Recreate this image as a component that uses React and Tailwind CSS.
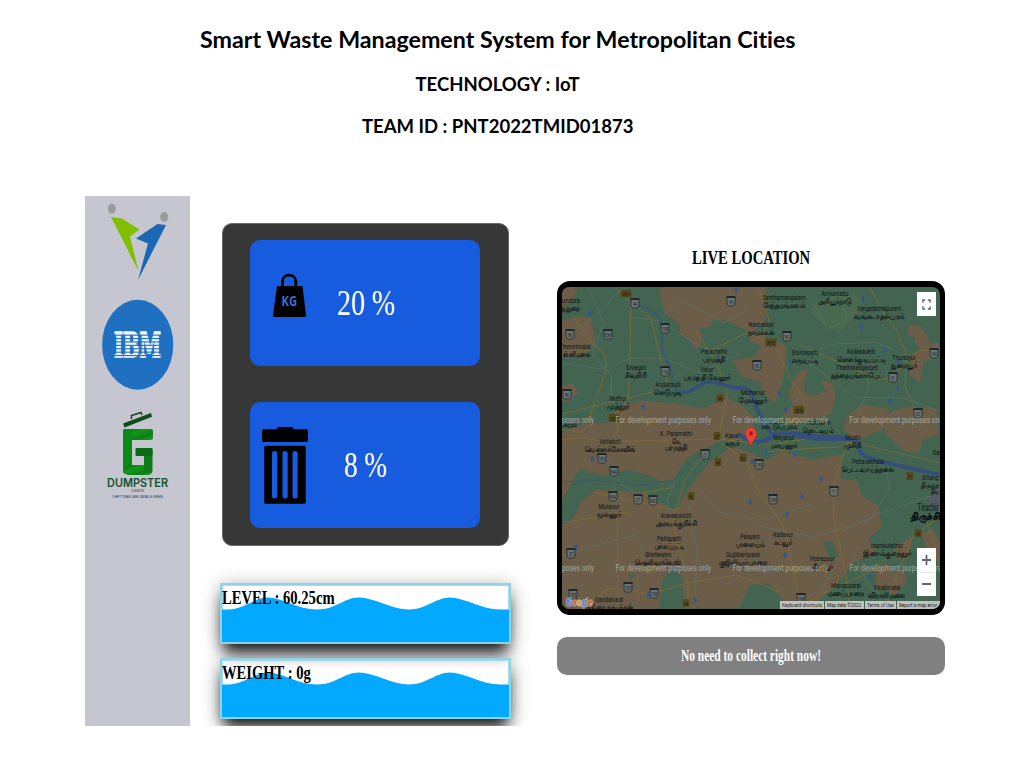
import { useLayoutEffect, useRef } from "react";

// Scales a single line of text horizontally so it fills its box.
function FitText({ className, children }) {
  const box = useRef(null);
  const line = useRef(null);
  useLayoutEffect(() => {
    const ratio = box.current.clientWidth / line.current.offsetWidth;
    line.current.style.transform = `scaleX(${ratio})`;
  }, []);
  return (
    <div ref={box} className={`flex whitespace-nowrap ${className}`}>
      <span ref={line} className="block shrink-0 origin-left">{children}</span>
    </div>
  );
}

function Header() {
  return (
    <header className="flex h-[196px] w-[995px] flex-col items-center pt-[24px] font-['Lato'] font-bold text-black [font-variant-ligatures:none]">
      <FitText className="h-[30px] w-[596px] text-[23.500px] leading-[30px]">Smart Waste Management System for Metropolitan Cities</FitText>
      <FitText className="mt-[17px] h-[26px] w-[164px] text-[18.500px] leading-[26px]">TECHNOLOGY : IoT</FitText>
      <FitText className="mt-[16px] h-[26px] w-[271px] text-[18.500px] leading-[26px]">TEAM ID : PNT2022TMID01873</FitText>
    </header>
  );
}

function PeopleLogo() {
  return (
    <svg className="mt-[5px] h-[82px] w-[70px]" viewBox="103 201 70 82">
      <ellipse cx="111.800" cy="208.700" rx="4" ry="5" fill="#9b9b9b" />
      <ellipse cx="164.200" cy="217" rx="4" ry="5" fill="#9b9b9b" />
      <path d="M111 217L122 218.500L139.500 229.500L130 236.500L138.500 271Z" fill="#7fbf00" />
      <path d="M166 225L157.500 224L136 238.500L148 243.500L138 280Z" fill="#1a68b3" />
    </svg>
  );
}

function IbmLogo() {
  return (
    <svg className="mt-[16px] h-[92px] w-[74px]" viewBox="101 299 74 92">
      <ellipse cx="137.700" cy="344.700" rx="35.600" ry="45" fill="#1f70c1" />
      <text x="114" y="357" fontFamily="DejaVu Serif" fontWeight="700" fontSize="34" textLength="47" lengthAdjust="spacingAndGlyphs" fill="#f0f7ff" stroke="#f0f7ff" strokeWidth="1.500">IBM</text>
      {[334.600, 338, 341.400, 344.800, 348.200, 351.600, 355].map((y) => (
        <rect key={y} x="110" y={y} width="55" height="1.100" fill="#1f70c1" />
      ))}
    </svg>
  );
}

function DumpsterLogo() {
  return (
    <svg className="mt-[17px] h-[95px] w-[80px]" viewBox="98 408 80 95">
      <defs>
        <linearGradient id="bin" x1="0" y1="0" x2="1" y2="1">
          <stop offset="0" stopColor="#0b5f13" />
          <stop offset="0.350" stopColor="#109a18" />
          <stop offset="0.700" stopColor="#0c7f16" />
          <stop offset="1" stopColor="#11a51c" />
        </linearGradient>
      </defs>
      <path d="M123 423.500L151 413L152 416.800L124.500 427.500Z" fill="#0d4d18" />
      <path d="M131.500 419V415.500L141 412.500L142 415" fill="none" stroke="#12401c" strokeWidth="1.500" />
      <rect x="123" y="429" width="30" height="11" rx="2" fill="url(#bin)" />
      <rect x="123" y="429" width="9" height="45" rx="3" fill="#0c8a16" />
      <rect x="125" y="465" width="27" height="10" rx="4" fill="url(#bin)" />
      <rect x="144" y="448" width="8.500" height="25" rx="2" fill="#0e7a18" />
      <rect x="135.500" y="448" width="17" height="8" rx="1" fill="#0b6a16" />
      <text x="107" y="487" fontFamily="Inter" fontWeight="600" fontSize="11.500" textLength="61" lengthAdjust="spacingAndGlyphs" fill="#164f28">DUMPSTER</text>
      <text x="131" y="492" fontFamily="Liberation Sans" fontSize="3" textLength="13" fill="#333a48">COLLECTS</text>
      <text x="112" y="497.500" fontFamily="Liberation Sans" fontSize="4.200" textLength="51" lengthAdjust="spacingAndGlyphs" fill="#2b3140">CHETTINAD IBM CATALIS SRMS</text>
    </svg>
  );
}

function WeightIcon() {
  return (
    <svg className="h-[46px] w-[36px]" viewBox="271 272 36 46">
      <path d="M282.500 288V281.500C282.500 273 295.800 273 295.800 281.500V288" fill="none" stroke="#000" strokeWidth="2.800" />
      <path d="M278 286H301.500Q302.400 286 302.600 287L306 315.500Q306 317 305 317H274Q272.800 317 273 315.500L276.800 287Q277 286 278 286Z" fill="#000" />
      <text x="281.500" y="306.300" fontFamily="Open Sans" fontWeight="700" fontSize="15" textLength="15.500" lengthAdjust="spacingAndGlyphs" fill="#3c6bd6">KG</text>
    </svg>
  );
}

function BinIcon() {
  return (
    <svg className="h-[78px] w-[48px]" viewBox="261 426 48 78">
      <rect x="276.800" y="427" width="16.500" height="5" rx="1.500" />
      <rect x="262" y="429.300" width="46" height="12.700" rx="1.500" />
      <rect x="264.200" y="445.700" width="41.500" height="58" rx="1.500" />
      {[272, 282.500, 292.500].map((x) => (
        <rect key={x} x={x} y="451" width="5.200" height="47.500" rx="2.500" fill="#175bde" />
      ))}
    </svg>
  );
}

function Gauges() {
  return (
    <section className="ml-[2px] mt-[27px] flex h-[323px] w-[287px] flex-col gap-[36px] rounded-[10px] border border-[#686868] bg-[#373737] pl-[27px] pt-[16px]">
      <div className="flex h-[126px] w-[230px] shrink-0 rounded-[10px] bg-[#175bde]">
        <div className="ml-[21px] mt-[32px]"><WeightIcon /></div>
        <FitText className="ml-[29.500px] mt-[43px] h-[40px] w-[58px] font-['Liberation_Serif'] text-[36px] leading-[40px] text-white">20 %</FitText>
      </div>
      <div className="flex h-[126px] w-[230px] shrink-0 rounded-[10px] bg-[#175bde]">
        <div className="ml-[11px] mt-[24px]"><BinIcon /></div>
        <FitText className="ml-[35px] mt-[43px] h-[40px] w-[43px] font-['Liberation_Serif'] text-[36px] leading-[40px] text-white">8 %</FitText>
      </div>
    </section>
  );
}

const WAVE =
  "M0 24.500H6C22 24.500 32 12.500 46 12.500S76 24.500 95 24.500S122 12.500 137 12.500S170 24.500 187 24.500S214 12.500 228 12.500S260 24.500 278 24.500H287V60H0Z";

function Wave({ label, width, className }) {
  return (
    <div className={`relative h-[60.500px] w-[291px] border-[2.500px] border-[#8fd3e8] ring-1 ring-[#a9dbe9] ring-inset shadow-[0_12px_14px_-4px_rgba(0,0,0,0.88),0_3px_18px_rgba(0,0,0,0.32)] ${className}`}>
      <svg className="block h-full w-full" viewBox="0 0 287 56.500" preserveAspectRatio="none">
        <path d={WAVE} fill="#02a9ff" />
      </svg>
      <div className="absolute left-0 top-[2px]">
        <FitText className={`font-['Liberation_Serif'] text-[18px] font-bold leading-[22px] text-black ${width}`}>{label}</FitText>
      </div>
    </div>
  );
}

const BROWN = [
  "M562 287H577L572 298L562 306Z",
  "M562 322L580 318L590 320L594 341L589 350L578 355L562 356Z",
  "M562 388L572 385L576 393L566 400H562Z",
  "M663 287C658 296 667 305 665 312L676 319L682 325L681 333L690 339L697 348L701 338L697 327L709 326L713 318L730 320L750 331L763 322L765 287Z",
  "M762 348L776 342L785 347L782 378L774 401L764 392L762 381L742 375L735 361L755 358Z",
  "M798 374L806 371L804 382L818 395L829 393L823 382L833 385L834 400L829 413L810 418L788 423L785 414L795 405L790 394Z",
  "M750 331L764 333L764 345L752 340Z",
  "M910 326L920 328L928 340L926 350L917 344L916 336L909 334Z",
  "M924 347L937 344L935 355L922 361L919 380L911 374L914 357Z",
  "M848 418L862 406L876 408L888 411L882 428L868 434L855 441L845 428Z",
  "M888 417L895 412L908 408L935 410L937 434L922 438L918 451L906 450L894 440L886 432Z",
  "M562 434L583 426L610 424L617 411L640 402L652 403L677 405L702 410L715 405L728 400L740 405L752 418L753 430L740 440L718 441L700 449L686 457L679 468L672 480L662 480L646 473L628 468L602 474L579 467L571 481L562 498Z",
  "M562 526L573 522L583 502L597 491L644 494L660 505L677 512L691 488L711 463L733 448L752 455L766 462L781 453L812 461L840 456L839 480L856 482L861 497L877 506L880 526L867 539L875 552L851 562L841 577L823 595L808 608H792L769 582L749 583L738 607H686L684 576L672 568L662 576L657 609H562Z",
  "M877 570L886 565L892 576L901 570L906 579L895 594L888 587L878 588Z",
  "M898 546L910 540L908 555L898 558Z",
  "M923 534L932 531L940 545V561L930 552Z",
];

const ROADS = [
  "M562 304C580 320 585 340 600 350S598 389 590 416S578 428 562 430",
  "M616 287L631 304L629 390L615 438",
  "M620 292L651 319L657 344L667 381L652 392L562 414",
  "M696 331L718 365L727 395L719 435L684 481L673 521L688 585V609",
  "M562 440C590 433 603 447 627 441L718 439L771 445L813 438L860 444L940 463",
  "M712 350L746 333L775 344L790 378L804 400L807 424",
  "M759 287L769 320L762 335M800 345L858 371L889 380L918 351L940 347",
  "M870 287L881 309L896 330L906 352L905 386L923 427",
  "M562 522L595 518L630 512M642 493L675 487M593 492L675 510",
  "M718 441L746 460L758 490L783 525L797 588L803 609",
  "M849 439L835 481L833 515L846 574L850 609",
  "M940 517L913 536L870 572L829 590L797 609M913 536L894 583L885 609",
  "M576 609L610 588L650 594L687 583L736 575L780 592",
  "M927 520L937 554L940 574M764 452L800 449L839 447",
];

const PATHS = [
  "M562 331C602 326 611 290 628 287M588 287L604 323L592 353L612 376L610 414",
  "M631 317L658 321L681 300L724 323L747 310M660 321L698 345L720 354",
  "M562 363L601 369L631 358L666 359L698 373L740 353",
  "M814 304L827 329L846 320L844 307M805 356L834 344L875 342L895 350",
  "M805 360L854 397L903 398L939 411M868 350L868 390L858 414",
  "M599 446L612 466L622 485L636 493M613 471L617 509L618 609",
  "M687 501L697 550L695 609M676 480L667 500L671 531",
  "M754 525L814 537L871 519L889 489L887 470M820 593L841 558",
  "M843 530L887 511L939 493M853 552L868 585L900 609",
  "M697 487L719 512L760 520L812 504M562 556L587 548L635 535L650 560",
];

// [x, y, latin name, width, tamil name, tamil width, emphasised]
const PLACES = [
  [571, 303, "undura", 18, "ந்துறை", 18],
  [577, 349, "hennimalai", 28, "ன்னிமலை", 28],
  [636, 370, "Sivagiri", 20, "சிவகிரி", 22],
  [714, 354, "Paramathi", 26, "பரமத்தி", 23],
  [707, 372, "Velur", 13, "பரமத்தி வேலூர்", 47],
  [668, 387, "Kodumudi", 25, "கொடுமுடி", 28],
  [618, 401, "Muthur", 17, "முத்தூர்", 22],
  [570, 419.500, "", 0, "கயம்", 14],
  [784, 300, "Senthamangalam", 43, "சேந்தமங்கலம்", 42],
  [835, 296, "Ariyurnadu", 27, "அரியூர்நாடு", 34],
  [879, 311, "Vangadathalpuram", 44, "வங்கடாதல்புரம்", 51],
  [761, 327, "Namakkal", 25, "நாமக்கல்", 27],
  [805, 355, "Erumapatti", 26, "எருமபட்டி", 27],
  [861, 354, "Kolakkatti", 28, "கொளக்குடிப்பட்டி", 48],
  [857, 370, "Thathaiangarpet", 42, "தத்தையங்கார்பேட்", 52],
  [904, 360, "Thuraiyur", 24, "துறையூர்", 26],
  [753, 395, "Mohanur", 24, "மோகனூர்", 28],
  [676, 436, "K. Paramathi", 32, "கே.", 9],
  [676, 442.500, "", 0, "பரமத்தி", 23],
  [610, 444, "Vellakoil", 21, "வெள்ளக்கோவில்", 51],
  [732, 438, "Karur", 14, "கரூர்", 15],
  [779, 421, "", 0, "காட்டுப்புரம்", 37],
  [818, 425, "Thottiyam", 25, "தொட்டியம்", 30],
  [784, 440, "Mayanur", 21, "மாயனூர்", 26],
  [853, 440, "Musiri", 15, "முசிறி", 18],
  [936, 455, "Sa", 7, "", 0],
  [868, 464, "Pettavaithalai", 32, "பெட்டவாய்த்தலை", 52],
  [930, 480, "Srirang", 16, "திருவர", 18],
  [935, 486.500, "", 0, "தீவ", 8],
  [609, 509, "Mulanur", 21, "மூலனூர்", 25],
  [676, 518, "Aravakurichi", 31, "அரவக்குறிச்சி", 41],
  [669, 541, "Pallapatti", 24, "பள்ளப்பட்டி", 29],
  [658, 557, "Sheliwales", 26, "ஷெலிவாலெஸ்", 46],
  [750, 539, "Palayam", 20, "பாளையம்", 29],
  [743, 557, "Gujjiliamparai", 34, "குஜிலியம்பாறை", 49],
  [783, 537, "Kadavur", 20, "கடவூர்", 18],
  [822, 561, "Veerappur", 25, "வீரப்பூர்", 22],
  [887, 548, "Inamkulathur", 32, "இனாம்குளத்தூர்", 48],
  [846, 588, "Manapparai", 30, "மணப்பாறை", 36],
  [887, 590, "Viralimalai", 27, "விராலிமலை", 38],
  [928, 511, "Tiruchir", 21, "திருச்சிர", 34, true],
  [609, 602, "Gandalvadi", 28, "குதிரை நாயக்கன்", 49],
];

const SHIELDS = [
  [635, 303, "44"], [665, 328, "198"], [608, 334, "83A"], [570, 334, "96"], [665, 371, "172A"], [731, 301, "94"],
  [567, 394, "96"], [787, 336, "161"], [757, 365, "95"], [893, 377, "31"], [934, 353, "142"], [918, 413, "62"],
  [602, 458, "191"], [614, 471, "84A"], [613, 496, "84A"], [638, 499, "37"], [653, 500, "84C"], [705, 454, "21"],
  [571, 553, "37"], [628, 587, "192"], [654, 593, "195"], [573, 594, "155"], [759, 464, "199"], [773, 499, "199"],
  [834, 491, "71"], [801, 598, "199"],
];

const HIGHWAYS = [
  [626, 293.500, "381A"], [771, 342.500, "381B"], [799, 410, "381B"], [720, 398, "44"], [614, 418, "381"],
  [717, 436, "67"], [718, 462, "44"], [743, 458, "83"], [691, 496, "44"], [686, 603, "44"], [910, 476, "81"], [918, 533, "83"],
];

const LAKES = [
  [590, 313], [736, 290], [643, 407], [863, 299], [861, 327], [779, 393], [791, 362], [786, 410], [890, 401], [898, 388],
  [898, 362], [592, 459], [576, 547], [802, 497], [787, 514], [785, 555], [869, 576], [695, 600], [648, 595], [821, 479],
  [795, 455], [750, 502], [752, 461], [766, 452], [885, 350],
];

const WATERMARK = "For development purposes only";

function Map() {
  return (
    <svg className="block h-full w-full" viewBox="562 287 378 322" preserveAspectRatio="none">
      <rect x="562" y="287" width="378" height="322" fill="#436450" />
      <path d="M810 310Q826 291 852 294T838 333L815 318Z" fill="#52704d" opacity=".45" />
      {BROWN.map((d) => (
        <path key={d} d={d} fill="#6c5d48" strokeLinejoin="round" stroke="#6c5d48" strokeWidth="3" />
      ))}
      <path d="M804 379L816 383L823 391L816 396L805 393Z" fill="#436450" />
      <path d="M823 543Q828 539 834 544L838 556Q832 562 827 553Z" fill="#436450" />
      <path d="M629 574L636 574L631 580Z" fill="#436450" />
      <path d="M928 497L940 486V511L931 507Z" fill="#555c63" />
      <g fill="none" stroke="#60716a" strokeWidth=".7" strokeLinejoin="round">{PATHS.map((d) => <path key={d} d={d} />)}</g>
      <g fill="none" stroke="#806c36" strokeWidth=".9" strokeLinejoin="round">{ROADS.map((d) => <path key={d} d={d} />)}</g>
      <path d="M636 304C649 309 660 314 662 325S658 348 667 360S667 386 680 392" fill="none" stroke="#375874" strokeWidth="1.600" />
      <path d="M680 392C694 395 697 382 709 382S729 389 742 388S753 405 761 417S767 431 775 435" fill="none" stroke="#344f79" strokeWidth="3.500" />
      <path d="M738 434C748 440 760 447 772 436C790 428 814 439 842 439S852 450 865 456S911 468 940 475" fill="none" stroke="#344f79" strokeWidth="4" />
      <path d="M795 434C814 441 830 436 846 439" fill="none" stroke="#344f79" strokeWidth="6" />
      <path d="M562 482L590 480L642 485L673 480L704 450L738 435" fill="none" stroke="#3d5965" strokeWidth="1" />
      {LAKES.map(([x, y]) => (
        <path key={`${x}-${y}`} d={`M${x - 2} ${y - 1}l3 -2l1 3l-2 4z`} fill="#34548a" />
      ))}
      {HIGHWAYS.map(([x, y, n]) => (
        <g key={`${x}-${y}`}>
          <rect x={x - (n.length > 2 ? 5.500 : 3.500)} y={y - 4} width={n.length > 2 ? 11 : 7} height="8" rx="1" fill="#54491d" />
          <text x={x} y={y + 2.500} fontSize="6" textAnchor="middle" textLength={n.length > 2 ? 8 : 4} lengthAdjust="spacingAndGlyphs" fill="#191b12">{n}</text>
        </g>
      ))}
      {SHIELDS.map(([x, y, n]) => (
        <g key={`${x}-${y}`}>
          <path d={`M${x - 4} ${y - 4}h8v7l-1.500 2h-5l-1.500 -2z`} fill="#6b7371" stroke="#20282a" strokeWidth=".8" />
          <path d={`M${x - 4.500} ${y - 4}h9`} stroke="#20282a" strokeWidth="1.800" />
          <text x={x} y={y + 3} fontSize="6" textAnchor="middle" textLength={n.length > 2 ? 6 : 4} lengthAdjust="spacingAndGlyphs" fill="#11191c">{n}</text>
        </g>
      ))}
      <g fontFamily="Roboto, 'Noto Sans', sans-serif" fill="#0c1214" textAnchor="middle">
        {PLACES.map(([x, y, en, w, ta, tw, big]) => (
          <g key={`${x}-${y}`} fontSize={big ? 10 : 8}>
            {en && <text x={x} y={y} textLength={w} lengthAdjust="spacingAndGlyphs">{en}</text>}
            {ta && <text x={x} y={y + (big ? 9 : 7.500)} fontWeight={big ? 700 : 400} stroke="#0c1214" strokeWidth=".2" textLength={tw} lengthAdjust="spacingAndGlyphs">{ta}</text>}
          </g>
        ))}
      </g>
      <g fontFamily="Roboto" fontSize="9" fill="#a5aaa2">
        {[422.500, 570.500].map((y) => (
          <g key={y}>
            <text x="562" y={y} textLength="32" lengthAdjust="spacingAndGlyphs">poses only</text>
            <text x="615.500" y={y} textLength="95.500" lengthAdjust="spacingAndGlyphs">{WATERMARK}</text>
            <text x="732.500" y={y} textLength="95.500" lengthAdjust="spacingAndGlyphs">{WATERMARK}</text>
          </g>
        ))}
        <text x="849.500" y="422.500" textLength="90" lengthAdjust="spacingAndGlyphs">For development purposes on</text>
        <text x="849.500" y="570.500" textLength="90" lengthAdjust="spacingAndGlyphs">For development purposes on</text>
      </g>
      <path d="M751 447C750 440 745.500 439.500 745.500 433.500A5.500 6 0 0 1 756.500 433.500C756.500 439.500 752 440 751 447Z" fill="#ea4335" stroke="#b5251b" strokeWidth=".5" />
      <ellipse cx="751" cy="433.500" rx="1.900" ry="2.200" fill="#a31912" />
      <text x="566" y="605.500" fontFamily="Liberation Sans" fontWeight="700" fontSize="11" textLength="26.500" lengthAdjust="spacingAndGlyphs" stroke="#d8d8d8" strokeWidth="1" paintOrder="stroke">
        <tspan fill="#3f76dc">G</tspan><tspan fill="#d6493c">o</tspan><tspan fill="#dfa51f">o</tspan><tspan fill="#3f76dc">g</tspan><tspan fill="#3b9a50">l</tspan><tspan fill="#d6493c">e</tspan>
      </text>
    </svg>
  );
}

function MapPanel() {
  return (
    <div className="relative mt-[14px] h-[334px] w-[388px] overflow-hidden rounded-[13px] border-x-[5px] border-y-[6px] border-black bg-black font-['Roboto']">
      <Map />
      <div className="absolute right-[4px] top-[5px] flex h-[24px] w-[19px] items-center justify-center bg-white">
        <svg className="h-[11px] w-[9px]" viewBox="0 0 10 12" fill="none" stroke="#666" strokeWidth="1.500">
          <path d="M1 4V1H3.500M6.500 1H9V4M9 8V11H6.500M3.500 11H1V8" />
        </svg>
      </div>
      <div className="absolute bottom-[13px] right-[4px] flex h-[48px] w-[19px] flex-col items-center bg-white pt-[7px]">
        <svg className="h-[10px] w-[9px]" viewBox="0 0 9 10" stroke="#666" strokeWidth="1.800"><path d="M0 5H9M4.500 0V10" /></svg>
        <div className="mt-[7px] h-px w-[14px] bg-[#e6e6e6]" />
        <div className="mt-[10px] h-[2px] w-[9px] bg-[#666]" />
      </div>
      <div className="absolute bottom-0 right-0 flex h-[8px] gap-px text-[6px] leading-[8px] text-[#222]">
        <div className="w-[44px] bg-[#bfc2bb] pl-[2px]"><FitText className="w-[40px]">Keyboard shortcuts</FitText></div>
        <div className="w-[39px] bg-[#bfc2bb] pl-[2px]"><FitText className="w-[34px]">Map data ©2022</FitText></div>
        <div className="w-[31px] bg-[#bfc2bb] pl-[2px]"><FitText className="w-[27px]">Terms of Use</FitText></div>
        <div className="w-[43px] bg-[#bfc2bb] pl-[2px]"><FitText className="w-[38px]">Report a map error</FitText></div>
      </div>
    </div>
  );
}

export default function App() {
  return (
    <div className="h-[760px] w-[1009px] overflow-hidden bg-white">
      <Header />
      <main className="ml-[85px] flex h-[530px] overflow-hidden">
        <aside className="flex w-[105px] flex-col items-center bg-[#c5c6d0]">
          <PeopleLogo />
          <IbmLogo />
          <DumpsterLogo />
        </aside>
        <div className="ml-[30px] w-[310px]">
          <Gauges />
          <Wave label="LEVEL : 60.25cm" width="w-[112.500px]" className="mt-[37px]" />
          <Wave label="WEIGHT : 0g" width="w-[89px]" className="mt-[14.500px]" />
        </div>
        <div className="ml-[27px] flex w-[388px] flex-col items-center font-['Liberation_Serif']">
          <FitText className="mt-[51px] h-[20px] w-[118px] text-[19px] font-bold leading-[22px] text-black">LIVE LOCATION</FitText>
          <MapPanel />
          <div className="mt-[22px] flex h-[38px] w-[388px] items-center justify-center rounded-[10px] bg-[#808080]">
            <FitText className="w-[140px] text-[16px] font-bold leading-[20px] text-white">No need to collect right now!</FitText>
          </div>
        </div>
      </main>
    </div>
  );
}
